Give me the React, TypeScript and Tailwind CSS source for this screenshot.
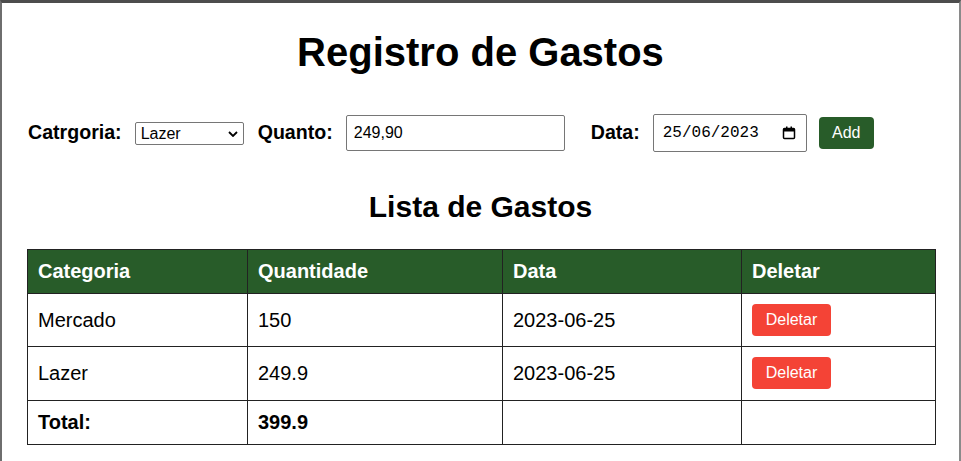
import React from "react"

type Gasto = { categoria: string; quantidade: number; data: string }

const gastos: Gasto[] = [
  { categoria: "Mercado", quantidade: 150, data: "2023-06-25" },
  { categoria: "Lazer", quantidade: 249.9, data: "2023-06-25" },
]

// chrome-like calendar glyph for the date field
const CalendarGlyph = () => (
  <svg width="14" height="14" viewBox="0 0 14 14" className="text-black">
    <rect x="1.5" y="2.5" width="11" height="10" rx="1" fill="none" stroke="currentColor" strokeWidth="1.5" />
    <rect x="1.5" y="2.5" width="11" height="3" fill="currentColor" />
    <rect x="4" y="0.5" width="1.5" height="3" fill="currentColor" />
    <rect x="8.5" y="0.5" width="1.5" height="3" fill="currentColor" />
  </svg>
)

export default function App() {
  const total = gastos.reduce((acc, g) => acc + g.quantidade, 0)

  return (
    <div className="h-[461px] w-[961px] overflow-hidden border-l-2 border-r-2 border-t-[3px] border-l-[#6e6e6e] border-r-[#8a8a8a] border-t-[#4d4d4d] bg-white font-['Liberation_Sans',Arial,sans-serif] text-black">
      <h1 className="mt-[26px] text-center text-[40px] font-bold leading-[46px]">Registro de Gastos</h1>

      {/* Formulario */}
      <div className="mt-[39px] flex h-[38px] items-center px-[26px]">
        <label className="text-[19.6px] font-bold">Catrgoria:</label>
        <div className="relative ml-[13px] h-[23px] w-[109px]">
          <select
            defaultValue="Lazer"
            className="h-full w-full appearance-none rounded-[2px] border border-[#767676] bg-white pl-[5px] text-[16px] leading-none outline-none"
          >
            <option>Mercado</option>
            <option>Lazer</option>
            <option>Transporte</option>
          </select>
          <svg width="10" height="6" viewBox="0 0 10 6" className="pointer-events-none absolute right-[6px] top-[9px]">
            <path d="M1 1l4 4 4-4" fill="none" stroke="black" strokeWidth="1.8" />
          </svg>
        </div>

        <label className="ml-[14px] text-[19.6px] font-bold">Quanto:</label>
        <input
          defaultValue="249,90"
          className="ml-[13px] h-[36px] w-[219px] rounded-[2px] border border-[#767676] pl-[7px] text-[16px] outline-none"
        />

        <label className="ml-[26px] text-[19.6px] font-bold">Data:</label>
        <div className="ml-[13px] flex h-[38px] w-[154px] items-center rounded-[2px] border border-[#767676] pl-[9px] pr-[10px]">
          <span className="font-['Liberation_Mono',monospace] text-[16px]">25/06/2023</span>
          <span className="ml-auto flex items-center">
            <CalendarGlyph />
          </span>
        </div>

        <button className="ml-[12px] h-[32px] w-[55px] rounded-[4px] bg-[#285c29] text-[16px] text-white">Add</button>
      </div>

      <h2 className="mt-[38px] text-center text-[30px] font-bold leading-[34px]">Lista de Gastos</h2>

      {/* Tabela */}
      <div className="mt-[25px] px-[25px]">
        <table className="w-[909px] table-fixed border-collapse border border-[#222] text-[20px] leading-[23px]">
          <thead>
            <tr className="bg-[#285c29] text-left text-white">
              <th className="w-[220px] border border-[#222] p-[10px] font-bold">Categoria</th>
              <th className="w-[255px] border border-[#222] p-[10px] font-bold">Quantidade</th>
              <th className="w-[239px] border border-[#222] p-[10px] font-bold">Data</th>
              <th className="border border-[#222] p-[10px] font-bold">Deletar</th>
            </tr>
          </thead>
          <tbody>
            {gastos.map((g, i) => (
              <tr key={i}>
                <td className="border border-[#222] p-[10px]">{g.categoria}</td>
                <td className="border border-[#222] p-[10px]">{g.quantidade}</td>
                <td className="border border-[#222] p-[10px]">{g.data}</td>
                <td className={`border border-[#222] px-[10px] pt-[10px] ${i === 1 ? "pb-[11px]" : "pb-[10px]"}`}>
                  <button className="block h-[32px] w-[79px] rounded-[4px] bg-[#f44336] text-[16px] leading-none text-white">
                    Deletar
                  </button>
                </td>
              </tr>
            ))}
            <tr className="font-bold">
              <td className="border border-[#222] p-[10px]">Total:</td>
              <td className="border border-[#222] p-[10px]">{total}</td>
              <td className="border border-[#222] p-[10px]"></td>
              <td className="border border-[#222] p-[10px]"></td>
            </tr>
          </tbody>
        </table>
      </div>
    </div>
  )
}
